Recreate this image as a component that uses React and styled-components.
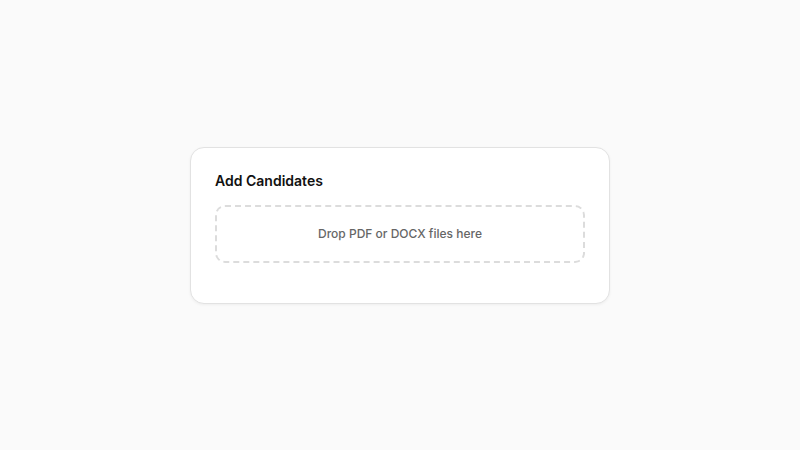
import React from "react";
import styled, { createGlobalStyle } from "styled-components";

const GlobalStyle = createGlobalStyle`
  html, body {
    margin: 0;
    padding: 0;
    background: #fafafa;
    font-family: Inter, "Liberation Sans", sans-serif;
  }
`;

const Page = styled.div`
  width: 800px;
  height: 450px;
  display: flex;
  align-items: center;
  justify-content: center;
`;

const Card = styled.section`
  box-sizing: border-box;
  width: 420px;
  padding: 24px 24px 40px;
  background: #ffffff;
  border: 1px solid #e2e2e2;
  border-radius: 14px;
  box-shadow: 0 1px 3px rgba(0, 0, 0, 0.05);
`;

const Title = styled.h3`
  margin: 0 0 15px;
  font-size: 14px;
  line-height: 18px;
  font-weight: 600;
  color: #111111;
`;

const DropZone = styled.div`
  box-sizing: border-box;
  height: 58px;
  border: 2px dashed #dcdcdc;
  border-radius: 10px;
  display: flex;
  align-items: center;
  justify-content: center;
  font-size: 12px;
  font-weight: 500;
  color: #666666;
`;

const App = () => {
  return (
    <>
      <GlobalStyle />
      <Page>
        <Card>
          <Title>Add Candidates</Title>
          <DropZone>Drop PDF or DOCX files here</DropZone>
        </Card>
      </Page>
    </>
  );
};

export default App;
